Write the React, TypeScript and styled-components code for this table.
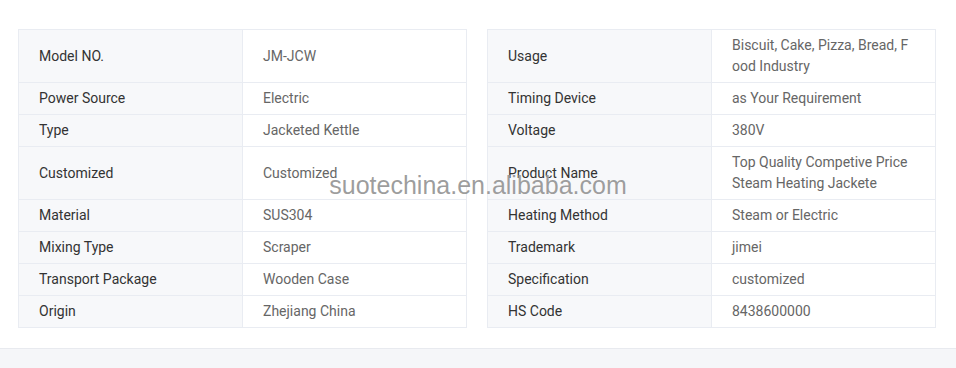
import React from "react";
import styled, { createGlobalStyle } from "styled-components";

const Global = createGlobalStyle`
  html, body { margin: 0; padding: 0; background: #ffffff; }
  body { font-family: Roboto, "Noto Sans", Arial, sans-serif; }
`;

const Page = styled.div`
  position: relative;
  width: 956px;
  height: 368px;
  overflow: hidden;
`;

const Specs = styled.div`
  padding: 29px 20px 20px 18px;
  display: flex;
  flex-direction: column;
`;

const Row = styled.div`
  display: grid;
  grid-template-columns: 449px 449px;
  column-gap: 20px;
`;

const Pair = styled.div<{ $first?: boolean }>`
  display: grid;
  grid-template-columns: 224px 223px;
  border: 1px solid #e9ecf2;
  border-top: ${(p) => (p.$first ? "1px solid #e9ecf2" : "none")};
`;

const Label = styled.div`
  display: flex;
  align-items: center;
  background: #f7f8fa;
  border-right: 1px solid #e9ecf2;
  padding: 5px 20px;
  font-size: 14px;
  line-height: 21px;
  color: #333333;
`;

const Value = styled.div`
  display: flex;
  align-items: center;
  background: #ffffff;
  padding: 5px 20px;
  font-size: 14px;
  line-height: 21px;
  color: #666666;
  word-break: break-all;
`;

const Footer = styled.div`
  height: 20px;
  background: #f5f6f9;
  border-top: 1px solid #e8eaef;
`;

const Watermark = styled.div`
  position: absolute;
  left: 0;
  right: 0;
  top: 171px;
  text-align: center;
  font-family: "Liberation Sans", Arial, sans-serif;
  font-size: 25px;
  line-height: 28px;
  color: rgba(140, 140, 140, 0.85);
  text-shadow: 0 0 1px rgba(255, 255, 255, 0.6);
  pointer-events: none;
`;

const rows: [string, string, string, string][] = [
  ["Model NO.", "JM-JCW", "Usage", "Biscuit, Cake, Pizza, Bread, Food Industry"],
  ["Power Source", "Electric", "Timing Device", "as Your Requirement"],
  ["Type", "Jacketed Kettle", "Voltage", "380V"],
  ["Customized", "Customized", "Product Name", "Top Quality Competive Price Steam Heating Jackete"],
  ["Material", "SUS304", "Heating Method", "Steam or Electric"],
  ["Mixing Type", "Scraper", "Trademark", "jimei"],
  ["Transport Package", "Wooden Case", "Specification", "customized"],
  ["Origin", "Zhejiang China", "HS Code", "8438600000"],
];

export default function App() {
  return (
    <Page>
      <Global />
      <Specs>
        {rows.map((r, i) => (
          <Row key={i}>
            <Pair $first={i === 0}>
              <Label>{r[0]}</Label>
              <Value>{r[1]}</Value>
            </Pair>
            <Pair $first={i === 0}>
              <Label>{r[2]}</Label>
              <Value>{r[3]}</Value>
            </Pair>
          </Row>
        ))}
      </Specs>
      <Footer />
      <Watermark>suotechina.en.alibaba.com</Watermark>
    </Page>
  );
}
